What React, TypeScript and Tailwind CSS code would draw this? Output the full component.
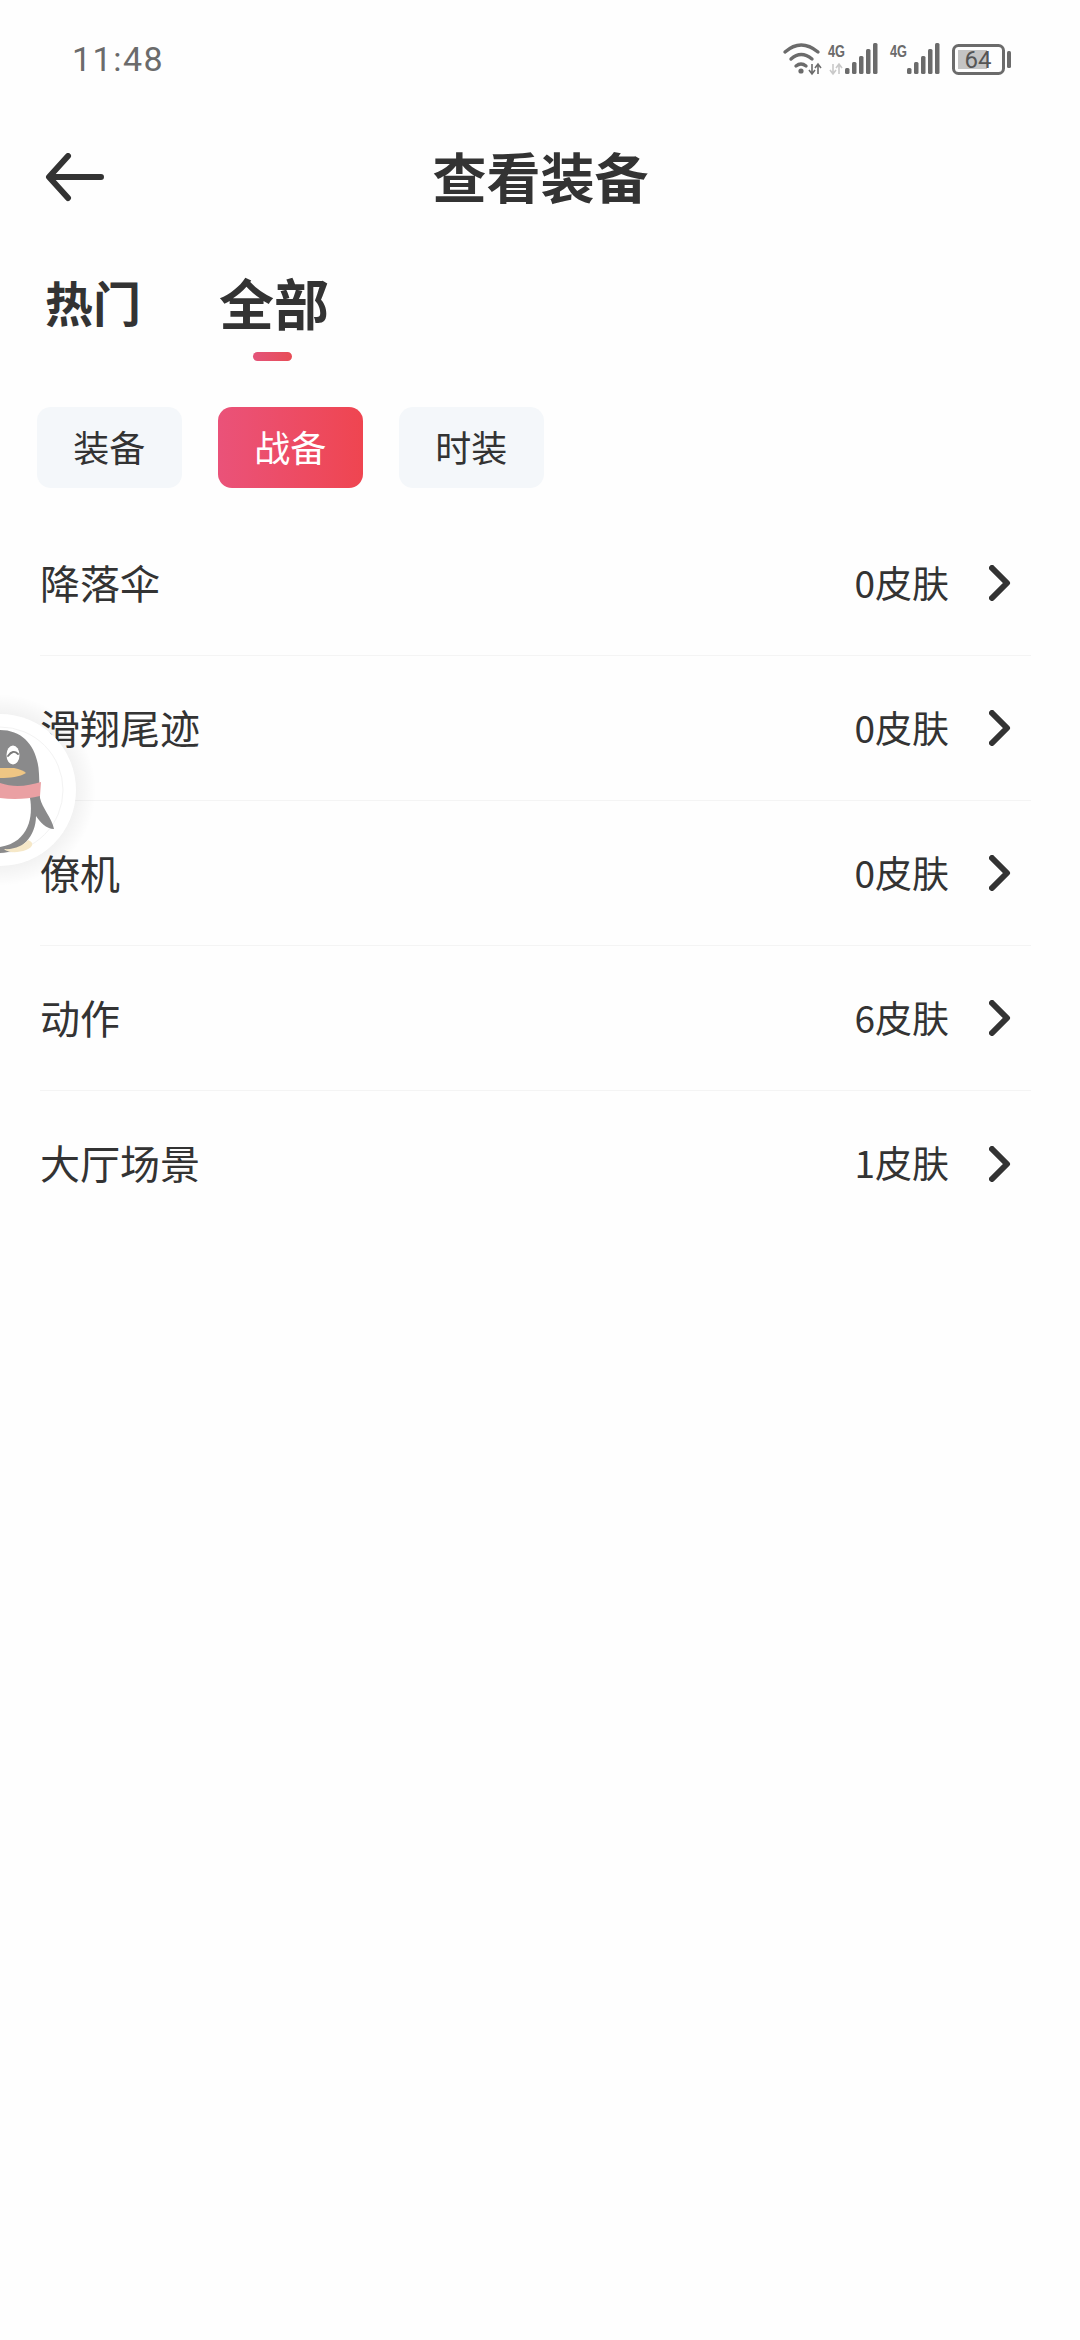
const rows = [
  { name: "降落伞", count: 0 },
  { name: "滑翔尾迹", count: 0 },
  { name: "僚机", count: 0 },
  { name: "动作", count: 6 },
  { name: "大厅场景", count: 1 },
];

const chips = ["装备", "战备", "时装"];

function StatusIcons() {
  return (
    <svg width="300" height="70" viewBox="740 20 300 70" fill="none">
      {/* wifi */}
      <g stroke="#6b6b6b" strokeWidth="3.4" strokeLinecap="round">
        <path d="M783 52 Q799 38 816 52" />
        <path d="M789 59 Q799 50 810 59" />
        <path d="M794 66 Q799 62 804 66" />
      </g>
      <circle cx="799" cy="71" r="2.6" fill="#6b6b6b" />
      <path d="M810 74V64M816 64V74M807 70l3 4 3-4M813 68l3-4 3 4" stroke="#6b6b6b" strokeWidth="1.6" />
      {/* sim 1 */}
      <text x="826" y="57" fontSize="16" fontWeight="700" fill="#6b6b6b" fontFamily="'Liberation Sans', sans-serif" textLength="17" lengthAdjust="spacingAndGlyphs">4G</text>
      <path d="M831 64V74M837 64V74M828 70l3 4 3-4M834 68l3-4 3 4" stroke="#c9c9c9" strokeWidth="1.6" />
      <g fill="#6b6b6b">
        <rect x="843" y="68" width="4.5" height="6" rx="1.5" />
        <rect x="850" y="62" width="4.5" height="12" rx="1.5" />
        <rect x="857" y="56" width="4.5" height="18" rx="1.5" />
        <rect x="864" y="49" width="4.5" height="25" rx="1.5" />
        <rect x="871" y="43" width="4.5" height="31" rx="1.5" />
      </g>
      {/* sim 2 */}
      <text x="888" y="57" fontSize="16" fontWeight="700" fill="#6b6b6b" fontFamily="'Liberation Sans', sans-serif" textLength="17" lengthAdjust="spacingAndGlyphs">4G</text>
      <g fill="#6b6b6b">
        <rect x="905" y="68" width="4.5" height="6" rx="1.5" />
        <rect x="912" y="62" width="4.5" height="12" rx="1.5" />
        <rect x="919" y="56" width="4.5" height="18" rx="1.5" />
        <rect x="926" y="49" width="4.5" height="25" rx="1.5" />
        <rect x="933" y="43" width="4.5" height="31" rx="1.5" />
      </g>
      {/* battery */}
      <rect x="951.5" y="45.5" width="50" height="28" rx="5" stroke="#6b6b6b" strokeWidth="3" />
      <rect x="956" y="50" width="29" height="19" fill="#c4c4c4" />
      <rect x="1005" y="51" width="4" height="17" rx="1.5" fill="#6b6b6b" />
      <text x="976" y="68" textAnchor="middle" fontSize="24" fill="#555555" fontFamily="'Roboto', sans-serif">64</text>
    </svg>
  );
}

function Penguin() {
  return (
    <div className="absolute left-0 top-[690px]">
      <svg width="110" height="200" viewBox="0 0 110 200" fill="none">
        <defs>
          <radialGradient id="halo" cx="0" cy="100" r="96" gradientUnits="userSpaceOnUse">
            <stop offset="0.78" stopColor="#000000" stopOpacity="0.05" />
            <stop offset="1" stopColor="#000000" stopOpacity="0" />
          </radialGradient>
        </defs>
        <circle cx="0" cy="100" r="96" fill="url(#halo)" />
        <circle cx="0" cy="100" r="76" fill="#ffffff" />
        <circle cx="0" cy="100" r="63" stroke="#f3f3f3" strokeWidth="1" />
        <path d="M0 40 C24 40 38 58 39 84 L40 108 C42 118 52 128 54 139 C46 139 40 132 36 126 C36 146 22 162 0 163 Z" fill="#8a8a8b" />
        <path d="M0 108 H30 C33 125 30 152 0 157 Z" fill="#ffffff" />
        <path d="M0 93 C14 98 28 96 41 92 L40 106 C28 109 14 110 0 108 Z" fill="#eaa0a3" />
        <path d="M0 78 H14 C20 79 24 81 26 83 C20 87 10 88 0 88 Z" fill="#efc684" />
        <ellipse cx="13" cy="65" rx="6.5" ry="9.5" fill="#ffffff" />
        <path d="M8 66 Q13 59 18 64" stroke="#7a7a7a" strokeWidth="1.8" strokeLinecap="round" />
        <path d="M4 159 C14 160 24 155 28 150 C34 152 34 157 26 160 C18 163 8 163 4 159 Z" fill="#f6e8c8" />
      </svg>
    </div>
  );
}

export default function App() {
  return (
    <div className="relative min-h-[2340px] w-[1080px] overflow-hidden bg-[#fefefe] text-[#333333] font-['Noto_Sans_CJK_SC','Noto_Sans',sans-serif]">
      {/* Status bar */}
      <div className="flex h-[118px] justify-between pl-[72px] pr-[38px] pt-[20px]">
        <span className="mt-[16px] font-['Roboto',sans-serif] text-[34px] leading-[46px] tracking-[1.5px] text-[#6b6b6b]">11:48</span>
        <StatusIcons />
      </div>

      {/* Header */}
      <div className="relative flex h-[120px] items-center justify-center">
        <svg className="absolute left-[45px] top-[35px]" width="60" height="50" viewBox="0 0 60 50" fill="none">
          <path d="M23 3 L4 24 L23 45 M5 24 H56" stroke="#333333" strokeWidth="6" strokeLinecap="round" strokeLinejoin="round" />
        </svg>
        <h1 className="mb-[5px] ml-[1px] text-[54px] font-bold leading-[72px]">查看装备</h1>
      </div>

      {/* Tabs */}
      <div className="mt-[29px] flex items-start pl-[45px]">
        <span className="text-[48px] font-bold leading-[68px]">热门</span>
        <div className="ml-[78px] flex flex-col">
          <span className="text-[55px] font-bold leading-[68px]">全部</span>
          <div className="ml-[34px] mt-[17px] h-[9px] w-[39px] rounded-full bg-gradient-to-r from-[#e3547a] to-[#e84c55]" />
        </div>
      </div>

      {/* Chips */}
      <div className="mt-[46px] flex gap-[36.5px] pl-[37px]">
        {chips.map((chip) => (
          <div
            key={chip}
            className={
              chip === "战备"
                ? "flex h-[81px] w-[144.5px] items-center justify-center rounded-[14px] bg-gradient-to-r from-[#ea5279] to-[#ef4550] pb-[3px] text-[36px] text-white"
                : "flex h-[81px] w-[144.5px] items-center justify-center rounded-[14px] bg-[#f4f7fa] pb-[3px] text-[36px]"
            }
          >
            {chip}
          </div>
        ))}
      </div>

      {/* List */}
      <div className="mt-[23px] pl-[40px] pr-[49px]">
        {rows.map((row, i) => (
          <div
            key={row.name}
            className={
              i < rows.length - 1
                ? "flex h-[145px] items-center justify-between border-b border-[#f4f4f4] pr-[20px]"
                : "flex h-[145px] items-center justify-between pr-[20px]"
            }
          >
            <span className="mb-[3px] text-[40px] leading-[56px]">{row.name}</span>
            <div className="flex items-center gap-[40px]">
              <span className="mb-[3px] text-[37px] leading-[50px]">{row.count}皮肤</span>
              <svg width="22" height="36" viewBox="0 0 22 36" fill="none">
                <path d="M3 3 L18 18 L3 33" stroke="#333333" strokeWidth="6" strokeLinecap="round" strokeLinejoin="round" />
              </svg>
            </div>
          </div>
        ))}
      </div>

      <Penguin />
    </div>
  );
}
